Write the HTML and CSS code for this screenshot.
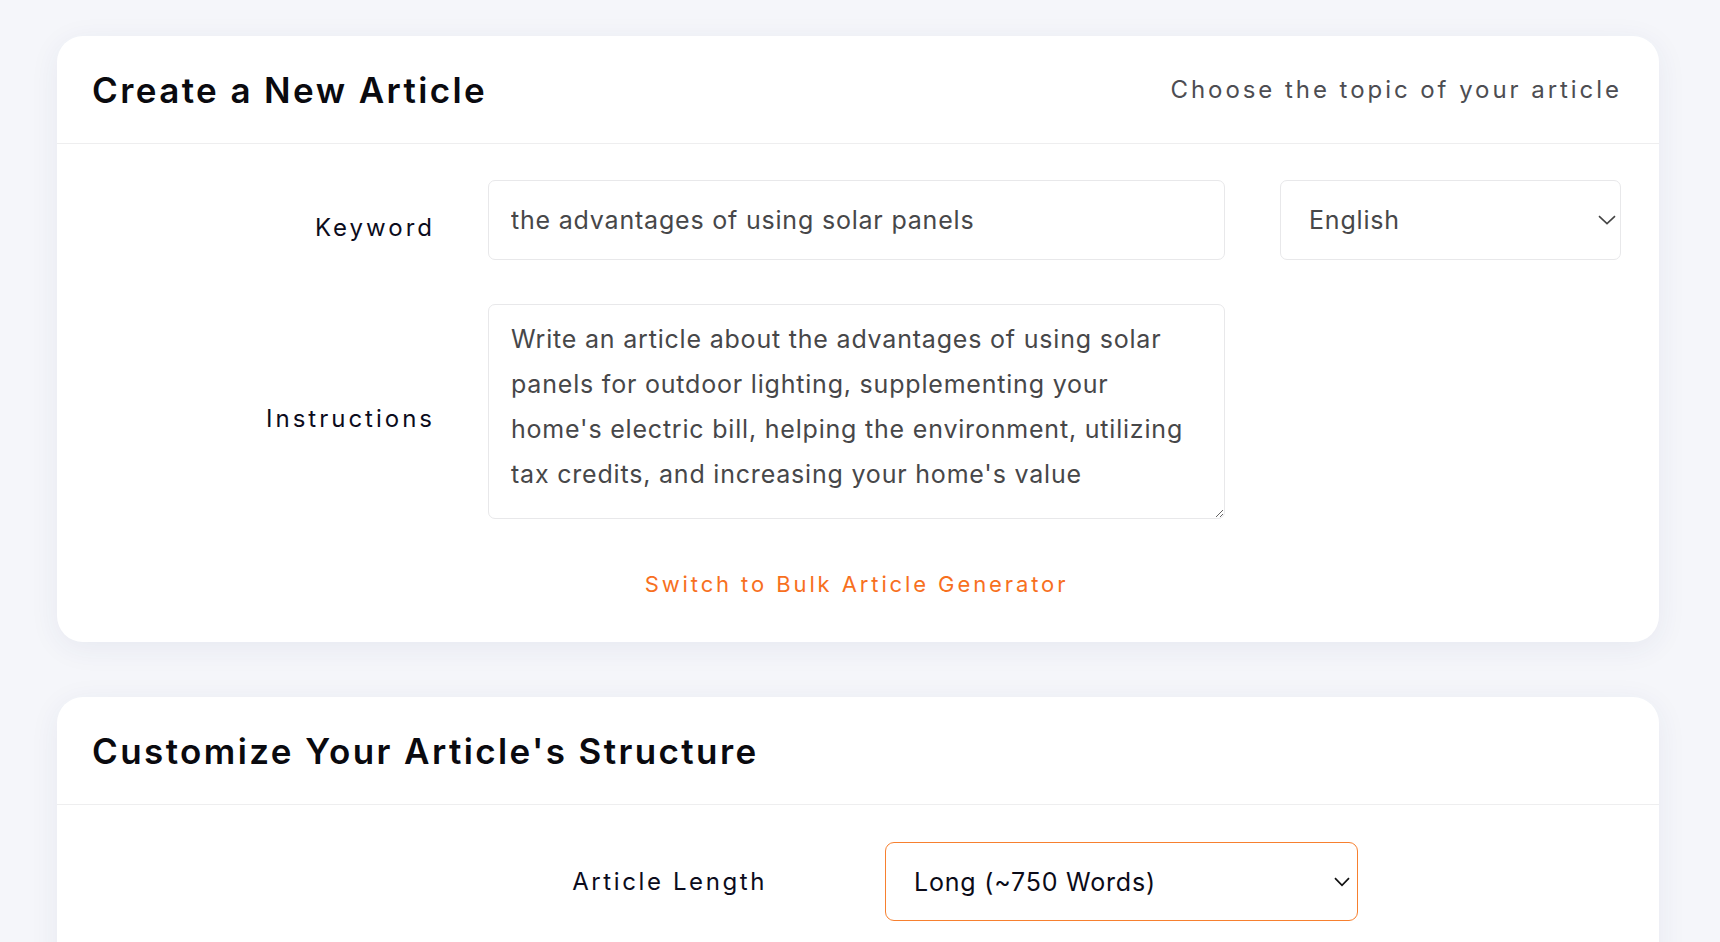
FILE: index.html
```html
<!DOCTYPE html>
<html lang="en">
<head>
<meta charset="utf-8">
<title>Create a New Article</title>
<link rel="stylesheet" href="styles.css">
</head>
<body>
<main class="page">
  <section class="card">
    <header class="card-head">
      <h2 class="card-title">Create a New Article</h2>
      <p class="card-sub">Choose the topic of your article</p>
    </header>
    <div class="card-body topic-grid">
      <label class="field-label" for="kw">Keyword</label>
      <input class="field" id="kw" type="text" value="the advantages of using solar panels">
      <div class="select-wrap">
        <select class="field select">
          <option>English</option>
        </select>
        <svg class="chev" width="18" height="10" viewBox="0 0 18 10"><path d="M1 1.2 L9 8.6 L17 1.2" fill="none" stroke="#444" stroke-width="1.6"/></svg>
      </div>
      <label class="field-label" for="ins">Instructions</label>
      <textarea class="field area" id="ins">Write an article about the advantages of using solar panels for outdoor lighting, supplementing your home's electric bill, helping the environment, utilizing tax credits, and increasing your home's value</textarea>
      <div class="empty"></div>
      <div class="empty"></div>
      <a class="bulk-link" href="#">Switch to Bulk Article Generator</a>
    </div>
  </section>

  <section class="card">
    <header class="card-head">
      <h2 class="card-title">Customize Your Article's Structure</h2>
    </header>
    <div class="card-body length-row">
      <label class="field-label len-label" for="len">Article Length</label>
      <div class="select-wrap len-wrap">
        <select class="field select len-select" id="len">
          <option>Long (~750 Words)</option>
        </select>
        <svg class="chev chev-sm" width="16" height="10" viewBox="0 0 16 10"><path d="M1 1.2 L8 8.4 L15 1.2" fill="none" stroke="#111" stroke-width="1.7"/></svg>
      </div>
    </div>
  </section>
</main>
</body>
</html>
```

FILE: styles.css
```css
* { box-sizing: border-box; }

html, body {
  margin: 0;
  padding: 0;
  background: #f5f6fa;
  font-family: Inter, "Open Sans", Arial, sans-serif;
  overflow: hidden;
}

.page {
  padding: 36px 61px 0 57px;
  display: flex;
  flex-direction: column;
  gap: 55px;
}

.card {
  background: #ffffff;
  border-radius: 26px;
  box-shadow: 0 6px 30px rgba(40, 55, 110, 0.07);
}

.card-head {
  height: 108px;
  display: flex;
  align-items: center;
  justify-content: space-between;
  padding: 0 37px 0 35px;
  border-bottom: 1px solid #eeeeef;
}

.card-title {
  margin: 0;
  font-size: 35px;
  font-weight: 600;
  letter-spacing: 2.4px;
  color: #0a0a0f;
}

.card-sub {
  margin: 0;
  font-size: 24px;
  font-weight: 400;
  letter-spacing: 2.95px;
  color: #4d4d52;
}

.card-body {
  padding: 36px 37px 43px 0;
}

.topic-grid {
  display: grid;
  grid-template-columns: 376px 737px 341px;
  grid-template-rows: 80px 215px auto;
  column-gap: 55px;
  row-gap: 44px;
}

.topic-grid .field-label { margin-right: -2px; }

.field-label {
  display: flex;
  align-items: center;
  justify-content: flex-end;
  padding-top: 14px;
  font-size: 24px;
  letter-spacing: 3px;
  color: #0c0c1c;
}

.field {
  width: 100%;
  height: 100%;
  border: 1px solid #e8e8ea;
  border-radius: 7px;
  background: #fff;
  font-family: Inter, "Open Sans", Arial, sans-serif;
  font-size: 25px;
  letter-spacing: 0.8px;
  color: #474749;
  padding: 0 22px;
  outline: none;
  margin: 0;
}

.area {
  resize: both;
  padding: 12px 38px 12px 22px;
  line-height: 45px;
}

.select-wrap {
  position: relative;
  height: 100%;
}

.select {
  appearance: none;
  -webkit-appearance: none;
  padding-left: 28px;
}

.chev {
  position: absolute;
  right: 5px;
  top: 50%;
  margin-top: -5px;
  pointer-events: none;
}

.bulk-link {
  grid-column: 2;
  margin-top: 6px;
  text-align: center;
  font-size: 22px;
  letter-spacing: 2.9px;
  color: #f7701e;
  text-decoration: none;
  line-height: 30px;
}

.length-row {
  display: flex;
  padding: 37px 0 60px 0;
}

.len-label {
  width: 710px;
  height: 79px;
  padding-top: 0;
  letter-spacing: 2.6px;
}

.len-wrap {
  width: 473px;
  height: 79px;
  margin-left: 118px;
}

.len-select {
  border-color: #f7802f;
  border-radius: 9px;
  color: #0b0b18;
  padding-left: 28px;
}

.chev-sm {
  right: 8px;
}
```
